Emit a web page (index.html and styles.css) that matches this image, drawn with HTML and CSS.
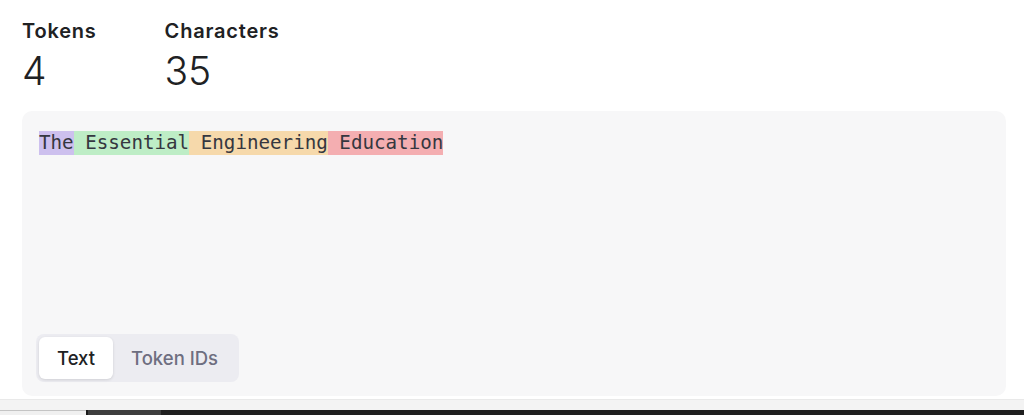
FILE: index.html
```html
<!DOCTYPE html>
<html lang="en">
<head>
<meta charset="utf-8">
<title>Tokenizer</title>
<link rel="stylesheet" href="styles.css">
</head>
<body>
<main class="page">
  <section class="stats">
    <div class="stat">
      <div class="stat-label">Tokens</div>
      <div class="stat-value">4</div>
    </div>
    <div class="stat">
      <div class="stat-label">Characters</div>
      <div class="stat-value">35</div>
    </div>
  </section>
  <section class="card">
    <div class="tokens"><span class="tok tok-purple">The</span><span class="tok tok-green"> Essential</span><span class="tok tok-orange"> Engineering</span><span class="tok tok-red"> Education</span></div>
    <div class="toggle">
      <button class="toggle-btn active">Text</button>
      <button class="toggle-btn">Token IDs</button>
    </div>
  </section>
</main>
<div class="band"></div>
<div class="taskbar">
  <div class="tb-light"></div>
  <div class="tb-edge"></div>
  <div class="tb-mid"></div>
  <div class="tb-dark"></div>
</div>
</body>
</html>
```
FILE: styles.css
```css
html, body {
  margin: 0;
  padding: 0;
  background: #ffffff;
  height: 415px;
  overflow: hidden;
}
body {
  font-family: Inter, "Noto Sans", sans-serif;
  color: #202123;
}
.page {
  padding: 19px 18px 0 22px;
  height: 377px;
  display: flex;
  flex-direction: column;
}
.stats {
  display: flex;
  gap: 68px;
}
.stat {
  display: flex;
  flex-direction: column;
}
.stat-label {
  font-size: 20px;
  font-weight: 600;
  line-height: 24px;
  letter-spacing: 0.8px;
}
.stat-value {
  font-size: 39px;
  font-weight: 300;
  line-height: 46px;
  margin-top: 5px;
  letter-spacing: -0.3px;
}
.card {
  margin-top: 17px;
  height: 285px;
  box-sizing: border-box;
  background: #f7f7f8;
  border-radius: 10px;
  padding: 20px 16px 14px 17px;
  display: flex;
  flex-direction: column;
  justify-content: space-between;
}
.tokens {
  font-family: "DejaVu Sans Mono", "Liberation Mono", monospace;
  font-size: 19.2px;
  line-height: 24px;
  color: #353740;
  white-space: pre;
}
.tok {
  display: inline-block;
  height: 24px;
}
.tok-purple { background: rgb(205, 192, 238); }
.tok-green { background: rgb(190, 237, 198); }
.tok-orange { background: rgb(246, 217, 171); }
.tok-red { background: rgb(244, 174, 177); }
.toggle {
  align-self: flex-start;
  display: flex;
  background: #ececf1;
  border-radius: 8px;
  padding: 3px;
  margin-left: -3px;
}
.toggle-btn {
  font-family: Inter, "Noto Sans", sans-serif;
  font-size: 18.5px;
  font-weight: 500;
  border: none;
  background: transparent;
  color: #6e6e80;
  height: 42px;
  padding: 0 18px;
  border-radius: 6px;
  cursor: pointer;
}
.toggle-btn.active {
  background: #ffffff;
  color: #202123;
  box-shadow: 0 1px 3px rgba(0, 0, 0, 0.12);
}
.band {
  margin-top: 3px;
  height: 10px;
  background: #f3f3f3;
  border-top: 1px solid #e9e9e9;
}
.taskbar {
  display: flex;
  height: 5px;
}
.tb-light {
  width: 86px;
  background: #f0f0f0;
  border-top: 1px solid #c4c4c4;
  box-sizing: border-box;
}
.tb-edge {
  width: 2px;
  background: #1a1a1a;
}
.tb-mid {
  width: 73px;
  background: #3d3d3d;
}
.tb-dark {
  flex: 1;
  background: #1f1f1f;
}
```
